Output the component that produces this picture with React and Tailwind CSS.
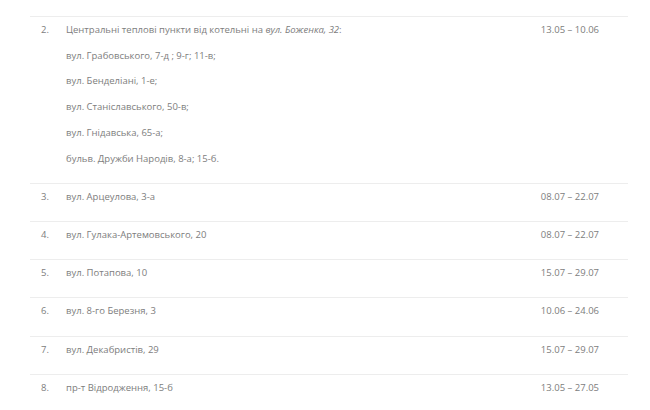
import React from "react";

const rows = [
  { n: "3.", addr: "вул. Арцеулова, 3-а", date: "08.07 – 22.07" },
  { n: "4.", addr: "вул. Гулака-Артемовського, 20", date: "08.07 – 22.07" },
  { n: "5.", addr: "вул. Потапова, 10", date: "15.07 – 29.07" },
  { n: "6.", addr: "вул. 8-го Березня, 3", date: "10.06 – 24.06" },
  { n: "7.", addr: "вул. Декабристів, 29", date: "15.07 – 29.07" },
  { n: "8.", addr: "пр-т Відродження, 15-б", date: "13.05 – 27.05" },
];

const subLines = [
  "вул. Грабовського, 7-д ; 9-г; 11-в;",
  "вул. Бенделіані, 1-е;",
  "вул. Станіславського, 50-в;",
  "вул. Гнідавська, 65-а;",
  "бульв. Дружби Народів, 8-а; 15-б.",
];

const Row = ({ n, date, children }) => (
  <div className="flex border-t border-[#ededed] pb-[11.5px]">
    <div className="w-[36px] pl-[11px] shrink-0">{n}</div>
    <div className="flex-1">{children}</div>
    <div className="w-[120px] pr-[29px] text-right shrink-0">{date}</div>
  </div>
);

export default function App() {
  return (
    <div
      className="w-[650px] h-[410px] overflow-hidden bg-white pt-[16px] pl-[30px] pr-[22px] text-[9.5px] leading-[25.7px] text-[#7d7d7d]"
      style={{ fontFamily: '"Open Sans", "Noto Sans", sans-serif' }}
    >
      <Row n="2." date="13.05 – 10.06">
        <div>
          Центральні теплові пункти від котельні на <em>вул. Боженка, 32</em>:
        </div>
        {subLines.map((l) => (
          <div key={l}>{l}</div>
        ))}
      </Row>
      {rows.map((r) => (
        <Row key={r.n} n={r.n} date={r.date}>
          {r.addr}
        </Row>
      ))}
    </div>
  );
}
